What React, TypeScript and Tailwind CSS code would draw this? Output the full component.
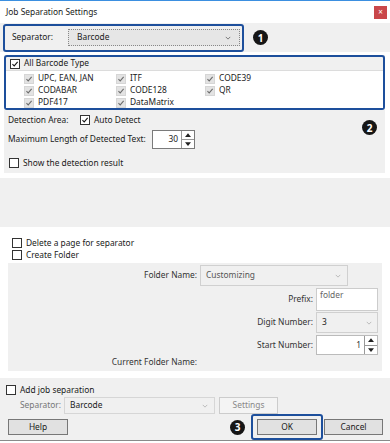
import React from "react";

const Check = ({ color = "#111" }: { color?: string }) => (
  <svg viewBox="0 0 10 10" className="h-full w-full">
    <path d="M1.8 5.2 L4 7.4 L8.3 2.4" fill="none" stroke={color} strokeWidth="1.3" />
  </svg>
);

function Box({ checked = false, disabled = false }: { checked?: boolean; disabled?: boolean }) {
  if (disabled) {
    return (
      <span className="inline-block h-[10px] w-[10px] shrink-0 border border-[#d6d6d6] bg-[#e3e3e3]">
        {checked && <Check color="#6b6b6b" />}
      </span>
    );
  }
  return (
    <span className="inline-block h-[10px] w-[10px] shrink-0 border border-[#333] bg-white">
      {checked && <Check />}
    </span>
  );
}

function Badge({ n }: { n: number }) {
  return (
    <span className="flex h-[15px] w-[15px] items-center justify-center rounded-full bg-[#161616] text-[10px] leading-none font-bold text-white">
      {n}
    </span>
  );
}

function Chevron({ color = "#555" }: { color?: string }) {
  return (
    <svg viewBox="0 0 8 5" className="h-[4px] w-[6px]">
      <path d="M1 1 L4 4 L7 1" fill="none" stroke={color} strokeWidth="1" />
    </svg>
  );
}

function Spinner() {
  return (
    <span className="flex h-full w-[13px] flex-col border-l border-[#999]">
      <span className="flex flex-1 items-center justify-center border-b border-[#999]">
        <svg viewBox="0 0 8 5" className="h-[4px] w-[6px]">
          <path d="M0 5 L4 0 L8 5 Z" fill="#222" />
        </svg>
      </span>
      <span className="flex flex-1 items-center justify-center">
        <svg viewBox="0 0 8 5" className="h-[4px] w-[6px]">
          <path d="M0 0 L4 5 L8 0 Z" fill="#222" />
        </svg>
      </span>
    </span>
  );
}

const barcodes = [
  ["UPC, EAN, JAN", "ITF", "CODE39"],
  ["CODABAR", "CODE128", "QR"],
  ["PDF417", "DataMatrix", ""],
];

export default function App() {
  return (
    <div className="relative h-[443px] w-[390px] overflow-hidden bg-white font-['Noto_Sans',sans-serif] text-[8.4px] text-[#1a1a1a]">
      {/* title bar */}
      <div className="flex h-[23px] items-center justify-between border-t border-[#3b8fe0] pr-[3px] pl-[6px]">
        <span>Job Separation Settings</span>
        <span className="flex h-[13px] w-[13px] items-center justify-center bg-[#c9474a] text-[8px] leading-none text-white">
          ×
        </span>
      </div>

      {/* separator row */}
      <div className="flex h-[29px] items-center bg-[#f0f0f0] pl-[3px]">
        <div className="flex h-[28px] w-[241px] items-center rounded-[3px] border-2 border-[#1d4f9c] pl-[7px]">
          <span className="w-[56px]">Separator:</span>
          <div className="flex h-[17px] w-[172px] items-center justify-between border border-dotted border-[#888] bg-[#e6e6e6] pr-[8px] pl-[8px]">
            <span>Barcode</span>
            <Chevron />
          </div>
        </div>
        <div className="ml-[9px]">
          <Badge n={1} />
        </div>
      </div>

      {/* barcode panel */}
      <div className="relative mt-[3px] mr-[5px] ml-[4px] flex h-[118px] flex-col bg-[#f0f0f0]">
        <div className="flex h-[55px] flex-col rounded-[3px] border-2 border-[#1d4f9c]">
          <div className="flex h-[16px] items-center gap-[4px] border-b border-[#dcdcdc] pl-[4px]">
            <Box checked />
            <span>All Barcode Type</span>
          </div>
          <div className="grid flex-1 grid-cols-[92px_89px_1fr] content-center gap-y-[1px] bg-white pt-[2px] pl-[18px]">
            {barcodes.flat().map((b, i) =>
              b ? (
                <div key={i} className="flex h-[11px] items-center gap-[4px]">
                  <Box checked disabled />
                  <span className="leading-none">{b}</span>
                </div>
              ) : (
                <div key={i} />
              )
            )}
          </div>
        </div>
        <div className="mt-[4px] flex items-center pl-[4px]">
          <span className="w-[72px]">Detection Area:</span>
          <Box checked />
          <span className="ml-[4px]">Auto Detect</span>
        </div>
        <div className="mt-[3px] flex items-center pl-[4px]">
          <span className="w-[144px]">Maximum Length of Detected Text:</span>
          <div className="flex h-[19px] w-[43px] items-center border border-[#7a7a7a] bg-white">
            <span className="flex-1 pr-[3px] text-right">30</span>
            <Spinner />
          </div>
        </div>
        <div className="mt-[8px] flex items-center gap-[4px] pl-[5px]">
          <Box />
          <span>Show the detection result</span>
        </div>
        <div className="absolute top-[65px] right-[8px]">
          <Badge n={2} />
        </div>
      </div>

      {/* empty band */}
      <div className="mt-[5px] h-[49px] bg-[#f0f0f0]" />

      {/* folder area */}
      <div className="flex h-[151px] flex-col">
        <div className="mt-[11px] flex items-center gap-[4px] pl-[12px]">
          <Box />
          <span className="leading-none">Delete a page for separator</span>
        </div>
        <div className="mt-[2px] flex items-center gap-[4px] pl-[12px]">
          <Box />
          <span className="leading-none">Create Folder</span>
        </div>
        <div className="mt-[3px] mr-[8px] ml-[8px] flex h-[108px] flex-col bg-[#f0f0f0] text-[#333]">
          <div className="mt-[2px] flex h-[21px] items-center">
            <span className="w-[189px] text-right">Folder Name:</span>
            <div className="ml-[3px] flex h-[21px] w-[148px] items-center justify-between border border-[#d0d0d0] bg-[#f0f0f0] pr-[6px] pl-[5px] text-[#555]">
              <span>Customizing</span>
              <Chevron color="#aaa" />
            </div>
          </div>
          <div className="mt-[2px] flex h-[23px] items-center justify-end pr-[4px]">
            <span>Prefix:</span>
            <div className="ml-[3px] h-[23px] w-[62px] border border-[#ccc] bg-white pl-[3px] leading-[12px] text-[#666]">
              folder
            </div>
          </div>
          <div className="mt-[1px] flex h-[21px] items-center justify-end pr-[4px]">
            <span>Digit Number:</span>
            <div className="ml-[3px] flex h-[21px] w-[62px] items-center justify-between border border-[#d0d0d0] bg-[#f0f0f0] pr-[5px] pl-[5px] text-[#222]">
              <span>3</span>
              <Chevron color="#aaa" />
            </div>
          </div>
          <div className="mt-[2px] flex h-[20px] items-center justify-end pr-[4px]">
            <span>Start Number:</span>
            <div className="ml-[3px] flex h-[20px] w-[62px] items-center border border-[#bbb] bg-white">
              <span className="flex-1 pr-[3px] text-right">1</span>
              <Spinner />
            </div>
          </div>
          <div className="mt-[1px] flex items-center">
            <span className="w-[189px] text-right">Current Folder Name:</span>
          </div>
        </div>
      </div>

      {/* bottom band */}
      <div className="flex h-[63px] flex-col border-b border-[#8a8a8a] bg-[#f0f0f0]">
        <div className="mt-[7px] flex items-center gap-[4px] pl-[6px]">
          <Box />
          <span className="leading-none">Add job separation</span>
        </div>
        <div className="mt-[2px] flex h-[17px] items-center pl-[20px]">
          <span className="w-[44px] text-[#777]">Separator:</span>
          <div className="flex h-[17px] w-[151px] items-center justify-between border border-[#d6d6d6] pr-[6px] pl-[5px]">
            <span>Barcode</span>
            <Chevron color="#aaa" />
          </div>
          <div className="ml-[4px] flex h-[17px] w-[59px] items-center justify-center border border-[#ccc] bg-[#f4f4f4] text-[#888]">
            Settings
          </div>
        </div>
        <div className="flex items-center pl-[8px]">
          <div className="flex h-[16px] w-[60px] items-center justify-center border border-[#777] bg-[#e1e1e1]">
            Help
          </div>
          <div className="ml-auto flex items-center">
            <Badge n={3} />
            <div className="ml-[6px] flex h-[26px] w-[72px] items-center justify-center rounded-[3px] border-2 border-[#1d4f9c]">
              <div className="flex h-[16px] w-[60px] items-center justify-center border border-[#777] bg-[#e1e1e1]">
                OK
              </div>
            </div>
            <div className="mr-[7px] ml-[1px] flex h-[16px] w-[59px] items-center justify-center border border-[#777] bg-[#e1e1e1]">
              Cancel
            </div>
          </div>
        </div>
      </div>
    </div>
  );
}
